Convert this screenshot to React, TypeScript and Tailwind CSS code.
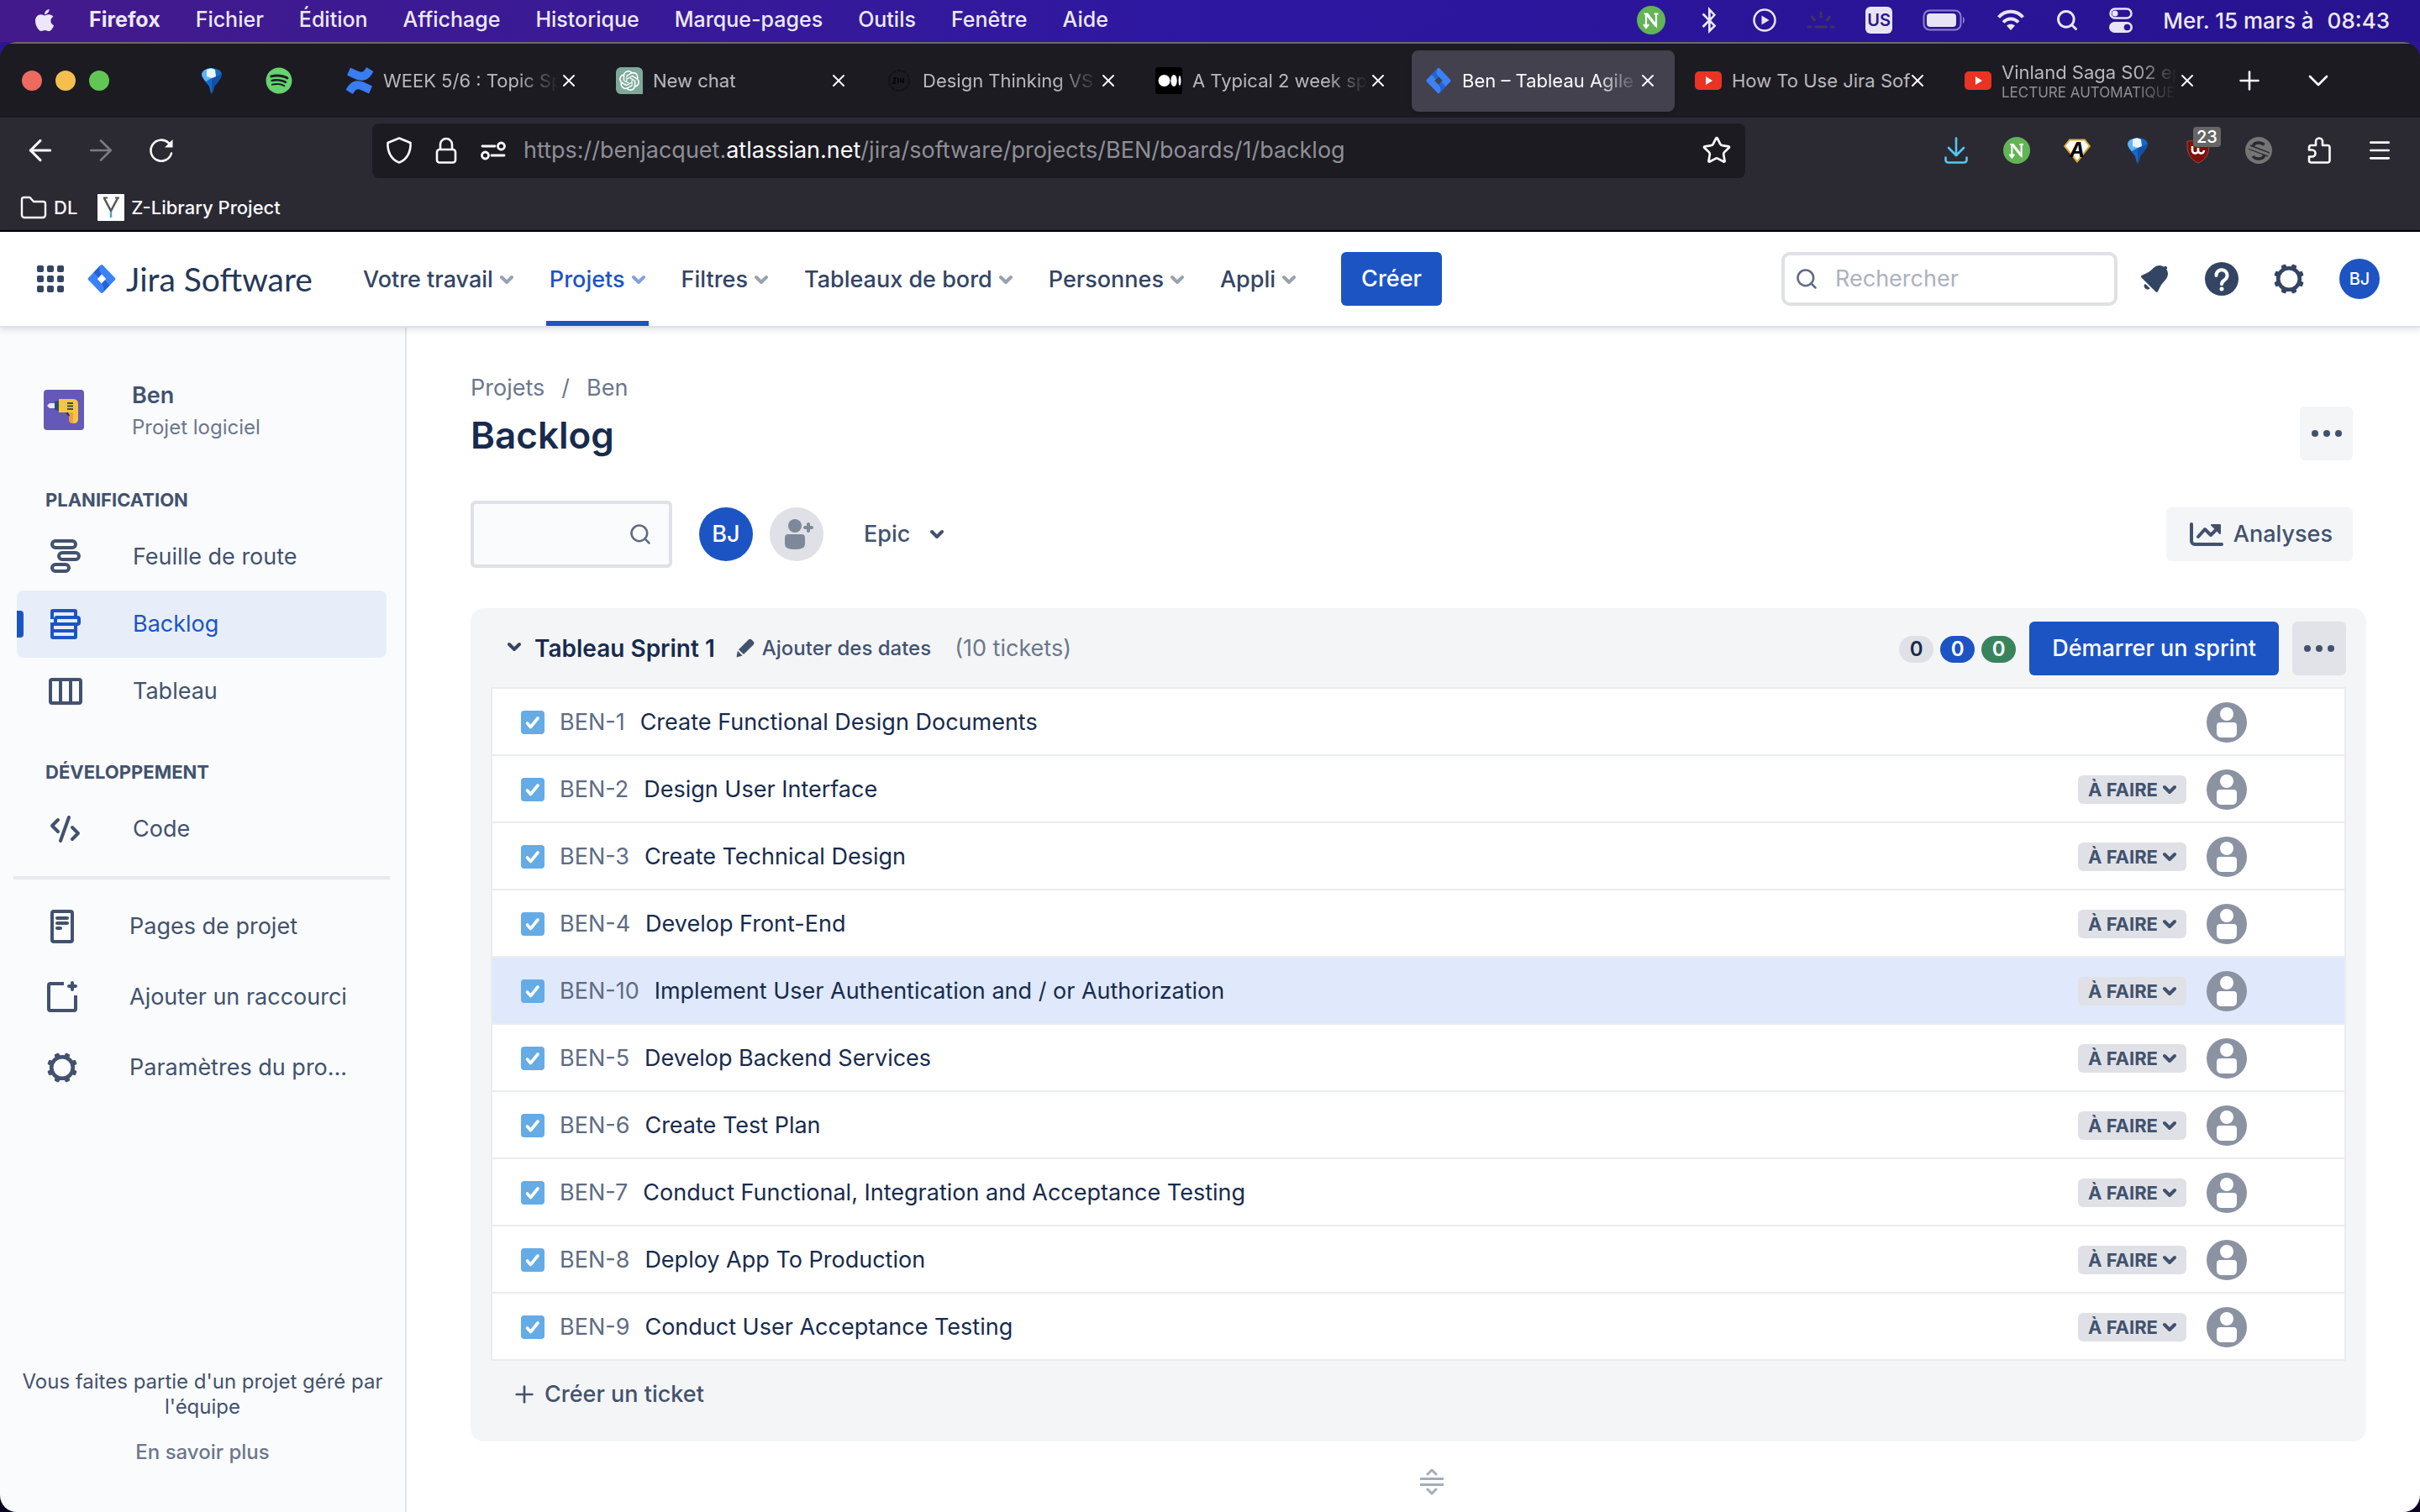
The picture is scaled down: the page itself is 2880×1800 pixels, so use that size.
import type { ReactNode } from "react";
import { ArrowLeft, ArrowRight, ChevronDown, Menu, Plus, Search, Star, X } from "lucide-react";
import { FaApple, FaBluetoothB, FaSpotify } from "react-icons/fa";
import { SiConfluence, SiOpenai } from "react-icons/si";

/* ---------- Menu bar glyphs ---------- */

function NeevaIcon({ className }: { className: string }) {
  return (
    <svg viewBox="0 0 34 34" className={className} aria-hidden="true">
      <circle cx="17" cy="17" r="17" fill="#62b455" />
      <path d="M11 24V9.500h1.500L23 23.500V10M20.500 9.500h5M8.500 9.500h4M8 22l3 4 3-4" fill="none" stroke="#fff" strokeWidth="2.200" />
      <path d="M12 10l11 14" stroke="#fff" strokeWidth="3.200" />
    </svg>
  );
}

function PlayCircle() {
  return (
    <svg viewBox="0 0 28 28" className="size-7" fill="none" aria-hidden="true">
      <circle cx="14" cy="14" r="12.500" stroke="#e9e4f5" strokeWidth="2.500" />
      <path d="M10.500 8.500v11l9-5.500z" fill="#e9e4f5" />
    </svg>
  );
}

function KeyboardLight() {
  return (
    <svg viewBox="0 0 34 24" className="h-6 w-[34px]" stroke="#3f3560" strokeWidth="3" strokeLinecap="round" aria-hidden="true">
      <path d="M17 3v5M6.500 8l3 4M27.500 8l-3 4M2 20h3M11 20h12M29 20h3" />
    </svg>
  );
}

function Battery() {
  return (
    <svg viewBox="0 0 52 26" className="h-[26px] w-[52px]" aria-hidden="true">
      <rect x="1.500" y="1.500" width="44" height="23" rx="7" fill="none" stroke="#8d82cc" strokeWidth="2" />
      <rect x="5" y="5" width="35" height="16" rx="4" fill="#e9e4f5" />
      <path d="M48 9c2.500 1 2.500 7 0 8z" fill="#8d82cc" />
    </svg>
  );
}

function Wifi() {
  return (
    <svg viewBox="0 0 34 28" className="h-7 w-[34px]" fill="none" stroke="#e9e4f5" strokeWidth="4" aria-hidden="true">
      <path d="M2.500 10.500c8-9 21-9 29 0M8 16.500c5-5.500 13-5.500 18 0" />
      <path d="M17 26l-5-5.500c3-2.500 7-2.500 10 0z" fill="#e9e4f5" stroke="none" />
    </svg>
  );
}

function ControlCenter() {
  return (
    <svg viewBox="0 0 28 30" className="h-[30px] w-7" aria-hidden="true">
      <rect x="1.500" y="1.500" width="25" height="11" rx="5.500" fill="none" stroke="#e9e4f5" strokeWidth="2.500" />
      <circle cx="7" cy="7" r="3.500" fill="#e9e4f5" />
      <rect y="17" width="28" height="13" rx="6.500" fill="#e9e4f5" />
      <circle cx="21.500" cy="23.500" r="3.800" fill="#28149a" />
    </svg>
  );
}

/* ---------- Browser glyphs ---------- */

function BalloonIcon({ className }: { className: string }) {
  return (
    <svg viewBox="0 0 32 32" className={className} aria-hidden="true">
      <path d="M4 8Q5 2 16 1q11 1 12 7 0 5-9 15-1 6-3 9-2-3-3-9Q4 13 4 8z" fill="#1668c9" />
      <path d="M16 1Q5 2 4 8q0 4 5 9l7-4z" fill="#5db4f5" />
      <path d="M10 3q6-3 10 0l1 8-5 2-6-2z" fill="#e9f6ff" />
      <path d="M28 8q0 5-9 15l-3 8V14z" fill="#1250a8" />
    </svg>
  );
}

function JiraMark({ className }: { className: string }) {
  return (
    <svg viewBox="0 0 34 36" className={className} aria-hidden="true">
      <path
        d="M15.800 1.500a1.700 1.700 0 012.400 0L32.800 16.700a1.900 1.900 0 010 2.600L18.200 34.500a1.700 1.700 0 01-2.400 0L1.200 19.300a1.900 1.900 0 010-2.600zM17 12.300L11.800 18l5.200 5.700L22.200 18z"
        fill="#3b82f6"
        fillRule="evenodd"
      />
      <path d="M17 12.300c-3.400-3.500-3.500-7.500-1-11L7.500 10.200l5.800 6.200z" fill="#2463d4" />
      <path d="M17 23.700c3.400 3.500 3.500 7.500 1 11l8.500-8.900-5.800-6.200z" fill="#2463d4" />
    </svg>
  );
}

function MediumIcon() {
  return (
    <svg viewBox="0 0 32 32" className="size-8" aria-hidden="true">
      <rect width="32" height="32" rx="3" fill="#000" />
      <circle cx="10.500" cy="16" r="7" fill="#fff" />
      <ellipse cx="22" cy="16" rx="3.700" ry="7" fill="#fff" />
      <ellipse cx="29" cy="16" rx="1.500" ry="6" fill="#fff" />
    </svg>
  );
}

function YoutubeIcon() {
  return (
    <svg viewBox="0 0 32 32" className="size-8" aria-hidden="true">
      <rect y="5" width="32" height="22" rx="5" fill="#ea3323" />
      <path d="M13 11v10l8-5z" fill="#fff" />
    </svg>
  );
}

function SealIcon() {
  return (
    <svg viewBox="0 0 32 32" className="size-8" aria-hidden="true">
      <circle cx="16" cy="16" r="12" fill="none" stroke="#111116" strokeWidth="2" strokeDasharray="5 1" />
      <path d="M9 13h3l-3 6h3M15 13v6M18 13v4h4M21 13v6" stroke="#08080a" strokeWidth="2" fill="none" />
    </svg>
  );
}

function Reload() {
  return (
    <svg viewBox="0 0 32 32" className="size-8" fill="none" stroke="#fbfbfe" strokeWidth="2.600" strokeLinecap="round" aria-hidden="true">
      <path d="M28 19.500A12.500 12.500 0 1124.500 7l3 3" />
      <path d="M29.500 3v9.500H20z" fill="#fbfbfe" stroke="none" />
    </svg>
  );
}

function ShieldIcon() {
  return (
    <svg viewBox="0 0 32 32" className="size-8" fill="none" stroke="#fbfbfe" strokeWidth="2.600" strokeLinejoin="round" aria-hidden="true">
      <path d="M16 1.500L29.500 7C30 17 26 27 16 30.500 6 27 2 17 2.500 7z" />
    </svg>
  );
}

function LockIcon() {
  return (
    <svg viewBox="0 0 32 32" className="size-8" fill="none" stroke="#fbfbfe" strokeWidth="2.600" aria-hidden="true">
      <rect x="5" y="15" width="22" height="15.500" rx="3" />
      <path d="M9 15V9a7 7 0 0114 0v6" />
    </svg>
  );
}

function PermissionsIcon() {
  return (
    <svg viewBox="0 0 32 32" className="size-8" fill="none" stroke="#fbfbfe" strokeWidth="2.800" strokeLinecap="round" aria-hidden="true">
      <path d="M3 11h15M14 22h15" />
      <circle cx="25.500" cy="11" r="4" />
      <circle cx="6.500" cy="22" r="4" />
    </svg>
  );
}

function DownloadIcon() {
  return (
    <svg viewBox="0 0 32 32" className="size-8" fill="none" stroke="#54c7ec" strokeWidth="2.600" strokeLinecap="round" strokeLinejoin="round" aria-hidden="true">
      <path d="M16 1.500v20M7 13l9 9 9-9M3.500 24.500v3a3 3 0 003 3h19a3 3 0 003-3v-3" />
    </svg>
  );
}

function ShieldA() {
  return (
    <span className="relative grid size-8 place-items-center">
      <svg viewBox="0 0 32 32" className="absolute inset-0 size-8" aria-hidden="true">
        <path d="M7 3.500h18L31 11 16 29.500 1 11z" fill="#fffdf4" stroke="#dca73a" strokeWidth="2" />
      </svg>
      <span className="relative text-[24px] leading-none font-bold text-black italic">A</span>
    </span>
  );
}

function UBlock() {
  return (
    <span className="relative block size-8">
      <svg viewBox="0 0 32 32" className="size-8" aria-hidden="true">
        <path d="M16 1c4 3 8 4 13 4 1 13-3 22-13 26C6 27 2 18 3 5c5 0 9-1 13-4z" fill="#7c120b" stroke="#a14740" strokeWidth="1" />
        <path d="M9 11v5a3.500 3.500 0 007 0v-3 3a3.500 3.500 0 007 0" fill="none" stroke="#fff" strokeWidth="2.600" />
      </svg>
      <span className="absolute -top-3 left-2.5 rounded-sm bg-[#666666] px-1 text-[20px] leading-6 font-medium text-white">23</span>
    </span>
  );
}

function GreyS() {
  return (
    <svg viewBox="0 0 32 32" className="size-8" aria-hidden="true">
      <circle cx="16" cy="16" r="16" fill="#757575" />
      <path d="M22.500 9.500C19 5.500 9 6 9.500 12c.5 5 13 3.500 13 9 0 6-10 6.500-13.500 2" fill="none" stroke="#2b2a33" strokeWidth="3.500" />
      <path d="M5 12l23 9" stroke="#2b2a33" strokeWidth="6" />
      <path d="M4 12l24 9" stroke="#757575" strokeWidth="3" />
    </svg>
  );
}

function PuzzleIcon() {
  return (
    <svg viewBox="0 0 32 32" className="size-8" fill="none" stroke="#fbfbfe" strokeWidth="2.600" strokeLinejoin="round" aria-hidden="true">
      <path d="M12 10V5.500a4 4 0 018 0V10h6a2.500 2.500 0 012.500 2.500v15.500A2.500 2.500 0 0126 30.500H6.500A2.500 2.500 0 014 28v-4.500h3.500a4 4 0 000-8H4v-3A2.500 2.500 0 016.500 10z" />
    </svg>
  );
}

function FolderIcon() {
  return (
    <svg viewBox="0 0 32 32" className="size-8" fill="none" stroke="#fbfbfe" strokeWidth="2.400" strokeLinejoin="round" aria-hidden="true">
      <path d="M2 25V6.500A2.500 2.500 0 014.500 4h7l4.500 5h11.500a2.500 2.500 0 012.500 2.500V25a3 3 0 01-3 3H5a3 3 0 01-3-3z" />
    </svg>
  );
}

function ZLibIcon() {
  return (
    <svg viewBox="0 0 32 32" className="size-8" aria-hidden="true">
      <rect width="32" height="32" rx="1" fill="#fff" />
      <path d="M8 5l8 15 8-15" fill="none" stroke="#55565a" strokeWidth="2.500" />
      <path d="M7 4.500h5M21 4.500h5" stroke="#55565a" strokeWidth="2" />
      <path d="M16 21v7" stroke="#49a7cf" strokeWidth="2.500" />
    </svg>
  );
}

/* ---------- Jira glyphs ---------- */

function Gear({ className }: { className: string }) {
  return (
    <svg viewBox="0 0 36 36" className={className} fill="none" aria-hidden="true">
      <circle cx="18" cy="18" r="12.800" stroke="currentColor" strokeWidth="4.600" />
      {[22.5, 67.5, 112.5, 157.5, 202.5, 247.5, 292.5, 337.5].map((angle) => (
        <rect key={angle} x="15" y="0" width="6" height="6" rx="1.500" fill="currentColor" transform={`rotate(${angle} 18 18)`} />
      ))}
    </svg>
  );
}

function AppGrid() {
  return (
    <svg viewBox="0 0 32 32" className="size-8" fill="#344563" aria-hidden="true">
      {[0, 12, 24].map((y) => [0, 12, 24].map((x) => <rect key={`${x}-${y}`} x={x} y={y} width="8" height="8" rx="2" />))}
    </svg>
  );
}

function Bell() {
  return (
    <svg viewBox="4 4 16 16" className="size-8" fill="#344563" aria-hidden="true">
      <path d="M6.485 17.669a2 2 0 002.829 0l-2.829-2.830a2 2 0 000 2.830zm4.897-12.191l-.725.725c-.782.782-2.210 1.813-3.206 2.311l-3.017 1.509c-.495.248-.584.774-.187 1.171l8.556 8.556c.398.396.922.313 1.171-.188l1.510-3.016c.494-.988 1.526-2.420 2.311-3.206l.725-.726a5.048 5.048 0 00.640-6.356 1.010 1.010 0 10-1.354-1.494c-.023.025-.046.049-.066.075a5.043 5.043 0 00-2.788-.840 5.036 5.036 0 00-3.570 1.478z" />
    </svg>
  );
}

function Help() {
  return (
    <svg viewBox="0 0 40 40" className="size-10" aria-hidden="true">
      <circle cx="20" cy="20" r="20" fill="#344563" />
      <path d="M13.500 16a6.500 6.500 0 1110 5.200c-2.300 1.500-3.500 2.300-3.500 5" fill="none" stroke="#fff" strokeWidth="4" strokeLinecap="round" />
      <circle cx="20" cy="32" r="2.500" fill="#fff" />
    </svg>
  );
}

function DrillAvatar() {
  return (
    <svg viewBox="0 0 48 48" className="size-12" aria-hidden="true">
      <rect width="48" height="48" rx="4" fill="#6459b8" />
      <path d="M4 19l3-3h7v6H7z" fill="#e8e8f2" />
      <path d="M13 14l5-1v12l-5-1z" fill="#294a7c" />
      <path d="M26 27h6v4h-3z" fill="#253858" />
      <path d="M18 11h17q6 0 6 6v18q0 5-5.500 5T30 35l1-5-2-3H18z" fill="#f7c544" />
      <path d="M29 27h6v13q-5 0-5-5l1-5z" fill="#ec9f45" />
      <path d="M28 16h7M28 19.500h7M28 23h7" stroke="#3a4a5e" strokeWidth="2" />
    </svg>
  );
}

function RoadmapIcon() {
  return (
    <svg viewBox="0 0 48 48" className="size-12" fill="none" stroke="currentColor" strokeWidth="4" aria-hidden="true">
      <rect x="8" y="5" width="28" height="8" rx="4" />
      <rect x="16" y="19" width="24" height="8" rx="4" />
      <rect x="8" y="33" width="20" height="8" rx="4" />
    </svg>
  );
}

function BacklogIcon() {
  return (
    <svg viewBox="0 0 48 48" className="size-12" fill="none" stroke="currentColor" strokeWidth="4" aria-hidden="true">
      <rect x="8" y="8" width="28" height="32" rx="1" />
      <path d="M8 32h28" />
      <path d="M6 20h4" stroke="#e7eefa" />
      <rect x="12" y="16" width="28" height="8" rx="2" fill="#e7eefa" />
      <path d="M6 24h8" />
    </svg>
  );
}

function BoardIcon() {
  return (
    <svg viewBox="0 0 48 48" className="size-12" fill="none" stroke="currentColor" strokeWidth="4" aria-hidden="true">
      <rect x="6" y="10" width="36" height="28" rx="2" />
      <path d="M18 10v28M30 10v28" />
    </svg>
  );
}

function CodeIcon() {
  return (
    <svg viewBox="0 0 48 48" className="size-12" fill="none" stroke="currentColor" strokeWidth="4" strokeLinecap="round" strokeLinejoin="round" aria-hidden="true">
      <path d="M15 13l-7 7 7 7M28 10l-10 28M32 22l7 7-7 7" />
    </svg>
  );
}

function PageIcon() {
  return (
    <svg viewBox="0 0 48 48" className="size-12" fill="none" stroke="currentColor" strokeWidth="4" strokeLinecap="round" aria-hidden="true">
      <rect x="12" y="6" width="24" height="36" rx="2" />
      <path d="M18 14h12M18 20h12M18 26h4" />
    </svg>
  );
}

function ShortcutIcon() {
  return (
    <svg viewBox="0 0 48 48" className="size-12" fill="none" stroke="currentColor" strokeWidth="4" aria-hidden="true">
      <path d="M26 8H10a2 2 0 00-2 2v28a2 2 0 002 2h28a2 2 0 002-2V22" />
      <path d="M36 7v8M32 11h8" strokeLinecap="round" />
    </svg>
  );
}

function SettingsIcon() {
  return (
    <span className="grid size-12 place-items-center">
      <Gear className="size-9" />
    </span>
  );
}

function AddPerson() {
  return (
    <svg viewBox="0 0 64 64" className="size-16" aria-hidden="true">
      <circle cx="32" cy="32" r="32" fill="#dfe1e6" />
      <circle cx="30" cy="22" r="8" fill="#7f889b" />
      <path d="M18 36a4 4 0 014-4h16a4 4 0 014 4v8q0 6-12 6t-12-6z" fill="#7f889b" />
      <path d="M46 20v8M42 24h8" stroke="#7f889b" strokeWidth="4" strokeLinecap="round" />
    </svg>
  );
}

function ChartIcon() {
  return (
    <svg viewBox="0 0 48 48" className="size-12" fill="none" stroke="currentColor" strokeWidth="4" strokeLinecap="round" aria-hidden="true">
      <path d="M6 12v20a4 4 0 004 4h32" />
      <path d="M14 27l8-9 7 7 9-9" strokeLinejoin="round" />
      <path d="M30 13h10v10z" fill="currentColor" strokeWidth="2" strokeLinejoin="round" />
    </svg>
  );
}

function Pencil() {
  return (
    <svg viewBox="0 0 24 24" className="size-6" fill="currentColor" aria-hidden="true">
      <path d="M15.500 1.800a3 3 0 014.200 0l1.700 1.700a3 3 0 010 4.200L10 19l-6-5.800zM2.800 14.800l5.800 5.600-6.200 1.900a.6.600 0 01-.8-.8z" />
    </svg>
  );
}

function TaskIcon() {
  return (
    <svg viewBox="0 0 28 28" className="size-7 shrink-0" aria-hidden="true">
      <rect width="28" height="28" rx="4" fill="#65abe6" />
      <path d="M7.500 15l4 4.500L20 9" fill="none" stroke="#fff" strokeWidth="3.600" strokeLinecap="round" strokeLinejoin="round" />
    </svg>
  );
}

function Unassigned() {
  return (
    <svg viewBox="0 0 48 48" className="size-12" aria-hidden="true">
      <circle cx="24" cy="24" r="24" fill="#8b92a2" />
      <circle cx="24" cy="14" r="8" fill="#fff" />
      <path d="M12 28a4 4 0 014-4h16a4 4 0 014 4v8q0 6-6 6H18q-6 0-6-6z" fill="#fff" />
    </svg>
  );
}

function Dots() {
  return (
    <svg viewBox="0 0 36 8" className="h-2 w-9" fill="#42526e" aria-hidden="true">
      <circle cx="4" cy="4" r="4" />
      <circle cx="18" cy="4" r="4" />
      <circle cx="32" cy="4" r="4" />
    </svg>
  );
}

function SmallChevron({ className }: { className: string }) {
  return (
    <svg viewBox="0 0 16 12" className={className} fill="none" stroke="currentColor" strokeWidth="4" strokeLinecap="round" strokeLinejoin="round" aria-hidden="true">
      <path d="M2 3l6 6 6-6" />
    </svg>
  );
}

function ResizeHandle() {
  return (
    <svg viewBox="0 0 28 32" className="h-8 w-7" fill="none" stroke="#a5adba" strokeWidth="3" aria-hidden="true">
      <path d="M0 12.500h28M0 19.500h28" />
      <path d="M9 7l5-5 5 5M9 25l5 5 5-5" strokeLinecap="round" strokeLinejoin="round" />
    </svg>
  );
}

/* ---------- Sections ---------- */

const menus = ["Fichier", "Édition", "Affichage", "Historique", "Marque-pages", "Outils", "Fenêtre", "Aide"];

function MenuBar() {
  return (
    <header className="flex h-[50px] items-center justify-between bg-linear-to-r from-[#431a8b] via-[#2d17a1] to-[#27138f] pr-9 pb-0.5 pl-[38px] text-[25px] font-medium text-[#ece8f7]">
      <nav className="flex items-center gap-[42px]">
        <FaApple className="-mr-1 size-[30px]" aria-label="Apple" />
        <button className="font-bold">Firefox</button>
        {menus.map((m) => (
          <button key={m}>{m}</button>
        ))}
      </nav>
      <div className="flex items-center gap-9">
        <NeevaIcon className="size-[34px]" />
        <FaBluetoothB className="size-8" />
        <PlayCircle />
        <KeyboardLight />
        <span className="grid size-8 place-items-center rounded-md bg-[#e9e4f5] text-[20px] font-semibold text-[#2a1596]">US</span>
        <Battery />
        <Wifi />
        <Search className="size-7" strokeWidth={2.5} />
        <ControlCenter />
        <span className="flex gap-4 text-[26px]">
          <span>Mer. 15 mars à</span>
          <time>08:43</time>
        </span>
      </div>
    </header>
  );
}

type TabData = { icon: ReactNode; title: string; note?: string; active?: boolean; fade?: boolean };

const tabs: TabData[] = [
  { icon: <SiConfluence className="size-8 text-[#3a7df2]" />, title: "WEEK 5/6 : Topic Sp", fade: true },
  {
    icon: (
      <span className="grid size-8 place-items-center rounded-md rounded-br-none bg-[#7fa99b] text-white">
        <SiOpenai className="size-6" />
      </span>
    ),
    title: "New chat",
  },
  { icon: <SealIcon />, title: "Design Thinking VS", fade: true },
  { icon: <MediumIcon />, title: "A Typical 2 week sp", fade: true },
  { icon: <JiraMark className="size-8" />, title: "Ben – Tableau Agile", active: true, fade: true },
  { icon: <YoutubeIcon />, title: "How To Use Jira Sof" },
  { icon: <YoutubeIcon />, title: "Vinland Saga S02 ep", note: "LECTURE AUTOMATIQUE", fade: true },
];

function Tab({ icon, title, note, active, fade }: TabData) {
  return (
    <div
      role="tab"
      aria-selected={active ?? false}
      className={
        active
          ? "flex h-[73px] max-w-[313px] flex-1 items-center rounded-lg bg-[#42414d] pr-5 pl-4 text-[#fbfbfe] shadow-md"
          : "flex h-[73px] max-w-[313px] flex-1 items-center rounded-lg pr-5 pl-4 text-[#b9b9bd]"
      }
    >
      <span className="mr-3 shrink-0">{icon}</span>
      <span
        className={
          fade
            ? "flex min-w-0 flex-1 flex-col [mask-image:linear-gradient(to_right,black_76%,transparent)] whitespace-nowrap"
            : "flex min-w-0 flex-1 flex-col whitespace-nowrap"
        }
      >
        <span className="text-[22px] leading-7">{title}</span>
        {note && <span className="text-[17px] leading-5 text-[#8f8f96]">{note}</span>}
      </span>
      <button aria-label={`Fermer ${title}`} className="shrink-0 text-[#fbfbfe]">
        <X className="size-6" strokeWidth={2} />
      </button>
    </div>
  );
}

function ToolButton({ label, children }: { label: string; children: ReactNode }) {
  return (
    <button aria-label={label} className="grid h-16 w-[72px] place-items-center text-[#fbfbfe]">
      {children}
    </button>
  );
}

function BrowserChrome() {
  return (
    <div className="border-b-2 border-black bg-[#2b2a33]">
      <div role="tablist" className="flex h-[90px] items-center border-t-2 border-[#6a6a6e] bg-[#1c1b22] pl-[26px]">
        <div className="flex w-[190px] gap-4">
          <button aria-label="Fermer" className="size-6 rounded-full bg-[#ed6a5f]" />
          <button aria-label="Réduire" className="size-6 rounded-full bg-[#f5bf4f]" />
          <button aria-label="Agrandir" className="size-6 rounded-full bg-[#62c655]" />
        </div>
        <div className="mr-7 flex gap-2">
          <button aria-label="Onglet épinglé" className="grid w-[72px] place-items-center">
            <BalloonIcon className="size-8" />
          </button>
          <button aria-label="Spotify" className="grid w-[72px] place-items-center">
            <FaSpotify className="size-8 text-[#65d36e]" />
          </button>
        </div>
        <div className="flex flex-1 items-center gap-2">
          {tabs.map((t) => (
            <Tab key={t.title} {...t} />
          ))}
          <button aria-label="Nouvel onglet" className="ml-4 text-[#fbfbfe]">
            <Plus className="size-9" strokeWidth={1.7} />
          </button>
          <button aria-label="Liste des onglets" className="ml-9 text-[#fbfbfe]">
            <ChevronDown className="size-10" strokeWidth={1.6} />
          </button>
        </div>
      </div>

      <div className="flex h-20 items-center px-3 pb-0.5">
        <ToolButton label="Précédent">
          <ArrowLeft className="size-10" strokeWidth={1.8} />
        </ToolButton>
        <ToolButton label="Suivant">
          <ArrowRight className="size-10 text-[#7c7b82]" strokeWidth={1.6} />
        </ToolButton>
        <ToolButton label="Actualiser">
          <Reload />
        </ToolButton>
        <div className="mx-[215px] flex h-[65px] min-w-0 flex-1 items-center rounded-lg bg-[#1c1b22] px-4">
          <ShieldIcon />
          <span className="ml-6">
            <LockIcon />
          </span>
          <span className="ml-6">
            <PermissionsIcon />
          </span>
          <div role="textbox" aria-label="Adresse" className="ml-5 flex-1 text-[27px] whitespace-nowrap text-[#8f8f95]">
            https://benjacquet.<span className="text-[#fbfbfe]">atlassian.net</span>/jira/software/projects/BEN/boards/1/backlog
          </div>
          <button aria-label="Marquer cette page" className="text-[#fbfbfe]">
            <Star className="size-9" strokeWidth={1.8} />
          </button>
        </div>
        <ToolButton label="Téléchargements">
          <DownloadIcon />
        </ToolButton>
        <ToolButton label="Extension N">
          <NeevaIcon className="size-8" />
        </ToolButton>
        <ToolButton label="Extension A">
          <ShieldA />
        </ToolButton>
        <ToolButton label="Extension ballon">
          <BalloonIcon className="size-8" />
        </ToolButton>
        <ToolButton label="Bloqueur de publicités">
          <UBlock />
        </ToolButton>
        <ToolButton label="Extension S">
          <GreyS />
        </ToolButton>
        <ToolButton label="Extensions">
          <PuzzleIcon />
        </ToolButton>
        <ToolButton label="Menu">
          <Menu className="size-8" strokeWidth={2} />
        </ToolButton>
      </div>

      <div className="flex h-[54px] items-center gap-6 px-6 text-[22px] font-medium text-[#fbfbfe]">
        <a href="#dl" className="flex items-center gap-2">
          <FolderIcon />
          DL
        </a>
        <a href="#zlib" className="flex items-center gap-2">
          <ZLibIcon />
          Z-Library Project
        </a>
      </div>
    </div>
  );
}

const navItems = ["Votre travail", "Projets", "Filtres", "Tableaux de bord", "Personnes", "Appli"];

function JiraHeader() {
  return (
    <header className="relative z-10 flex h-[112px] items-center bg-white pr-12 pl-11 text-[27px] font-medium text-[#344563] shadow-[0_2px_0_#dfe1e6,0_4px_8px_rgba(9,30,66,0.15)]">
      <button aria-label="Changer d'application">
        <AppGrid />
      </button>
      <a href="#accueil" className="mr-14 ml-7 flex items-center gap-3 font-['Lato'] text-[39px] font-normal text-[#253858]">
        <JiraMark className="h-9 w-[34px]" />
        Jira Software
      </a>
      <nav className="flex h-full items-stretch gap-[35px]">
        {navItems.map((item) => (
          <button
            key={item}
            className={
              item === "Projets"
                ? "flex items-center gap-2 border-y-6 border-t-transparent border-b-[#1d54c4] px-1 pt-0.5 text-[#1d54c4]"
                : "flex items-center gap-2 border-y-6 border-transparent px-1 pt-0.5"
            }
          >
            {item}
            <SmallChevron className={item === "Projets" ? "h-3 w-4 text-[#1d54c4]/55" : "h-3 w-4 text-[#344563]/50"} />
          </button>
        ))}
      </nav>
      <button className="ml-[50px] h-16 rounded-md bg-[#1d54c4] px-6 text-white">Créer</button>
      <label className="ml-auto flex h-16 w-[400px] items-center gap-5 rounded-[10px] border-4 border-[#dfe1e6] pl-3">
        <Search className="size-7 text-[#5e6c84]" strokeWidth={2.2} />
        <input placeholder="Rechercher" aria-label="Rechercher" className="min-w-0 flex-1 font-normal outline-none placeholder:text-[#abb2bf]" />
      </label>
      <button aria-label="Notifications" className="ml-7">
        <Bell />
      </button>
      <button aria-label="Aide" className="ml-11">
        <Help />
      </button>
      <button aria-label="Paramètres" className="ml-[42px]">
        <Gear className="size-9" />
      </button>
      <button className="ml-[42px] size-12 rounded-full bg-[#1d54c4] text-[20px] text-white">BJ</button>
    </header>
  );
}

function SideItem({ icon, label, active }: { icon: ReactNode; label: string; active?: boolean }) {
  return (
    <a
      href="#nav"
      className={
        active
          ? "relative flex h-20 items-center gap-14 rounded-lg bg-[#e7eefa] pl-[34px] text-[#1d54c4]"
          : "flex h-20 items-center gap-14 rounded-lg pl-[34px]"
      }
    >
      {active && <span className="absolute left-0 h-8 w-2 rounded-r-sm bg-[#1d54c4]" />}
      {icon}
      {label}
    </a>
  );
}

function Sidebar() {
  return (
    <aside className="flex w-[484px] shrink-0 flex-col border-r-2 border-[#e3e4e8] bg-[#fafbfd] text-[27px] text-[#42526e]">
      <div className="mt-[60px] flex items-start gap-[57px] pl-[52px]">
        <span className="mt-4">
          <DrillAvatar />
        </span>
        <div className="mt-1">
          <div className="leading-[38px] font-semibold">Ben</div>
          <div className="text-[24px] leading-[38px] text-[#6b778c]">Projet logiciel</div>
        </div>
      </div>
      <h2 className="mt-[53px] pl-[54px] text-[22px] leading-7 font-bold">PLANIFICATION</h2>
      <nav className="mt-[14px] mr-[22px] ml-5">
        <SideItem icon={<RoadmapIcon />} label="Feuille de route" />
        <SideItem icon={<BacklogIcon />} label="Backlog" active />
        <SideItem icon={<BoardIcon />} label="Tableau" />
      </nav>
      <h2 className="mt-[42px] pl-[54px] text-[22px] leading-7 font-bold">DÉVELOPPEMENT</h2>
      <nav className="mt-[14px] mr-[22px] ml-5">
        <SideItem icon={<CodeIcon />} label="Code" />
      </nav>
      <hr className="mr-[18px] ml-4 mt-4 border-t-4 border-[#e7e9ee]" />
      <nav className="mt-4 flex flex-col gap-1 px-4">
        <SideItem icon={<PageIcon />} label="Pages de projet" />
        <SideItem icon={<ShortcutIcon />} label="Ajouter un raccourci" />
        <SideItem icon={<SettingsIcon />} label="Paramètres du pro..." />
      </nav>
      <div className="mt-auto px-5 pb-14 text-center text-[24px] leading-[30px]">
        <p>Vous faites partie d'un projet géré par l'équipe</p>
        <a href="#plus" className="mt-6 inline-block font-medium text-[#6b778c]">
          En savoir plus
        </a>
      </div>
    </aside>
  );
}

const issues = [
  { id: "BEN-1", title: "Create Functional Design Documents" },
  { id: "BEN-2", title: "Design User Interface", status: "À FAIRE" },
  { id: "BEN-3", title: "Create Technical Design", status: "À FAIRE" },
  { id: "BEN-4", title: "Develop Front-End", status: "À FAIRE" },
  { id: "BEN-10", title: "Implement User Authentication and / or Authorization", status: "À FAIRE", selected: true },
  { id: "BEN-5", title: "Develop Backend Services", status: "À FAIRE" },
  { id: "BEN-6", title: "Create Test Plan", status: "À FAIRE" },
  { id: "BEN-7", title: "Conduct Functional, Integration and Acceptance Testing", status: "À FAIRE" },
  { id: "BEN-8", title: "Deploy App To Production", status: "À FAIRE" },
  { id: "BEN-9", title: "Conduct User Acceptance Testing", status: "À FAIRE" },
];

function SprintPanel() {
  return (
    <section className="mt-12 rounded-2xl bg-[#f4f5f7] px-6 pb-8">
      <div className="flex h-[94px] items-center pt-0.5 text-[27px]">
        <button aria-label="Réduire le sprint" className="ml-5 text-[#344563]">
          <SmallChevron className="mb-1 h-3 w-4" />
        </button>
        <h2 className="ml-4 text-[28px] font-semibold text-[#172b4d]">Tableau Sprint 1</h2>
        <button className="ml-6 flex items-center gap-2 text-[24px] font-medium text-[#42526e]">
          <Pencil />
          Ajouter des dates
        </button>
        <span className="ml-7 text-[#6b778c]">(10 tickets)</span>
        <div className="ml-auto flex gap-2 pt-0.5 text-[24px] leading-8 font-semibold">
          <span className="w-[41px] rounded-full bg-[#dfe1e6] text-center text-[#172b4d]">0</span>
          <span className="w-[41px] rounded-full bg-[#1d54c4] text-center text-white">0</span>
          <span className="w-[41px] rounded-full bg-[#39845c] text-center text-white">0</span>
        </div>
        <button className="ml-4 h-16 rounded-md bg-[#1d54c4] px-[27px] font-medium text-white">Démarrer un sprint</button>
        <button aria-label="Plus d'actions sur le sprint" className="ml-4 grid size-16 place-items-center rounded-md bg-[#e1e3e8]">
          <Dots />
        </button>
      </div>
      <ul className="border-x-2 border-t-2 border-[#ebecf0] bg-white text-[27px]">
        {issues.map((issue) => (
          <li
            key={issue.id}
            className={
              issue.selected
                ? "flex h-20 items-center border-b-2 border-[#ebecf0] bg-[#dfe9fb] pt-0.5 pr-[116px] pl-[34px]"
                : "flex h-20 items-center border-b-2 border-[#ebecf0] pt-0.5 pr-[116px] pl-[34px]"
            }
          >
            <TaskIcon />
            <a href="#ticket" className="ml-[18px] text-[#5e6c84]">
              {issue.id}
            </a>
            <span className="ml-[18px] flex-1 text-[#172b4d]">{issue.title}</span>
            {issue.status && (
              <button
                aria-haspopup="listbox"
                className="mr-6 flex h-[34px] w-[129px] items-center justify-center gap-1.5 rounded-md bg-[#dfe1e6] text-[22px] font-bold text-[#42526e]"
              >
                {issue.status}
                <SmallChevron className="h-3 w-4" />
              </button>
            )}
            <Unassigned />
          </li>
        ))}
      </ul>
      <button className="mt-4 ml-6 flex h-12 items-center gap-2 text-[27px] font-medium text-[#42526e]">
        <Plus className="size-8" strokeWidth={2} />
        Créer un ticket
      </button>
    </section>
  );
}

function Backlog() {
  return (
    <main className="flex min-w-0 flex-1 flex-col bg-white pt-[54px] pr-16 pl-[76px]">
      <nav aria-label="Fil d'Ariane" className="flex gap-5 text-[27px] leading-10 text-[#6b778c]">
        <a href="#projets">Projets</a>
        <span>/</span>
        <a href="#ben">Ben</a>
      </nav>
      <div className="mt-0.5 flex h-16 items-end justify-between pr-4">
        <h1 className="text-[44px] leading-[60px] font-semibold text-[#172b4d]">Backlog</h1>
        <button aria-label="Plus d'actions" className="grid h-16 w-[63px] place-items-center rounded-md bg-[#f4f5f7]">
          <Dots />
        </button>
      </div>
      <div className="mt-12 flex h-20 items-center pr-4 text-[27px] font-medium text-[#42526e]">
        <label className="flex h-20 w-60 items-center rounded-md border-4 border-[#dfe1e6] bg-[#fafbfc] px-5">
          <input aria-label="Rechercher dans le backlog" className="min-w-0 flex-1 outline-none" />
          <Search className="size-7 text-[#5e6c84]" strokeWidth={2.2} />
        </label>
        <button className="ml-8 size-16 rounded-full bg-[#1d54c4] text-white">BJ</button>
        <button aria-label="Ajouter des personnes" className="ml-5">
          <AddPerson />
        </button>
        <button className="ml-12 flex items-center gap-6">
          Epic
          <SmallChevron className="h-3 w-4" />
        </button>
        <button className="ml-auto flex h-16 items-center gap-2 rounded-md bg-[#f4f5f7] px-6">
          <ChartIcon />
          Analyses
        </button>
      </div>
      <SprintPanel />
      <div className="grid flex-1 place-items-center pt-3 pl-8">
        <button aria-label="Redimensionner">
          <ResizeHandle />
        </button>
      </div>
    </main>
  );
}

export default function App() {
  return (
    <div className="flex min-h-screen flex-col bg-linear-to-b from-[#2d1699] to-[#0b0320] font-['Inter',sans-serif]">
      <MenuBar />
      <div className="flex flex-1 flex-col overflow-hidden rounded-[20px]">
        <BrowserChrome />
        <JiraHeader />
        <div className="flex flex-1">
          <Sidebar />
          <Backlog />
        </div>
      </div>
    </div>
  );
}
